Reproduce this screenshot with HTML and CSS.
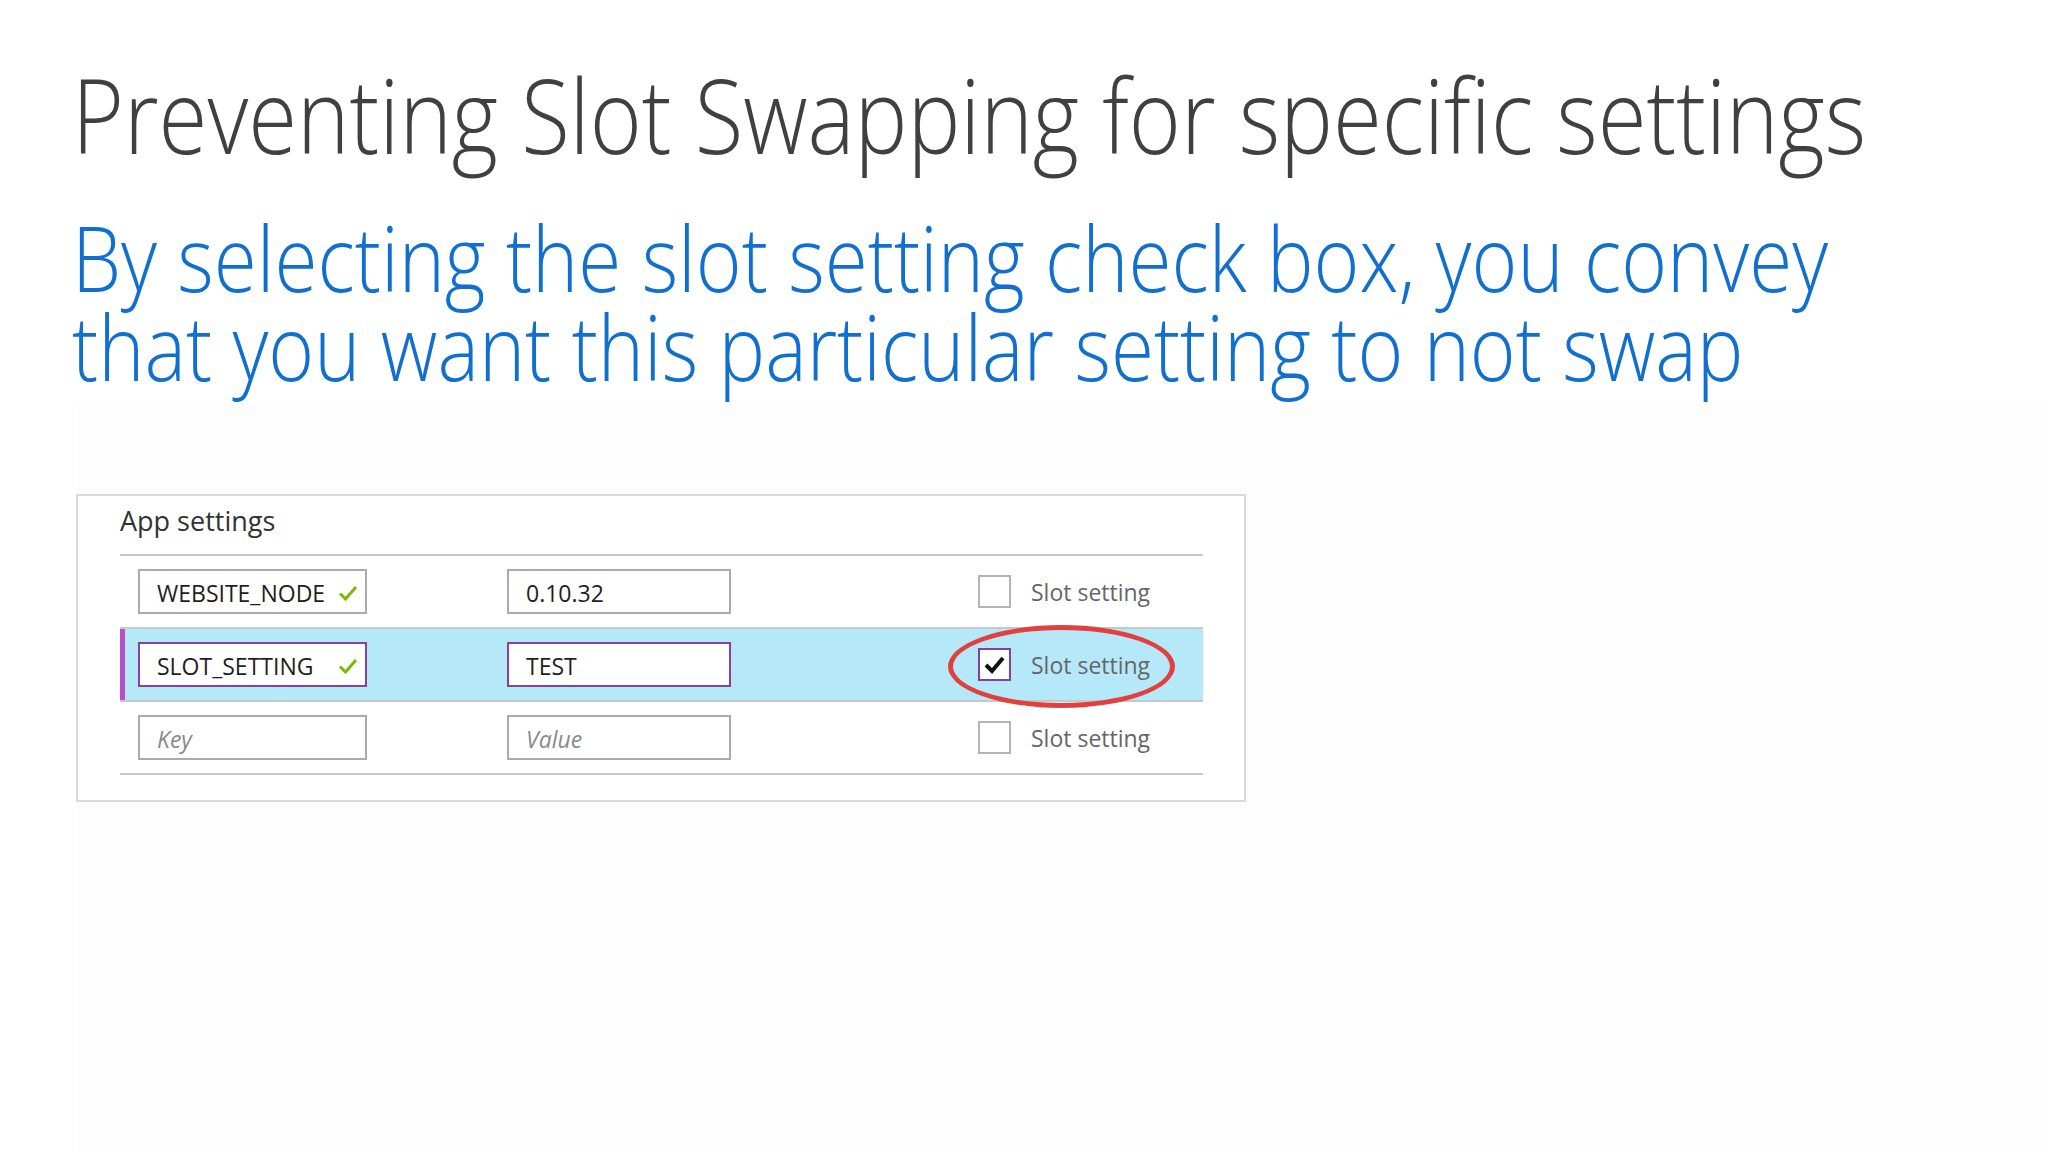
FILE: index.html
```html
<!DOCTYPE html>
<html lang="en">
<head>
<meta charset="utf-8">
<title>Preventing Slot Swapping for specific settings</title>
<link rel="stylesheet" href="styles.css">
</head>
<body>
<main class="slide">
  <h1 class="title"><span class="fit">Preventing Slot Swapping for specific settings</span></h1>
  <p class="lead"><span class="line">By selecting the slot setting check box, you convey</span><span class="line">that you want this particular setting to not swap</span></p>
  <section class="canvas">
    <div class="panel">
      <div class="panel-head">App settings</div>
      <div class="row">
        <div class="field key"><span class="txt">WEBSITE_NODE</span>
          <svg class="ok" viewBox="0 0 20 16" width="20" height="16"><path d="M2 8.5 L7.5 14 L18 2" fill="none" stroke="#7fba00" stroke-width="3"/></svg>
        </div>
        <div class="field val"><span class="txt">0.10.32</span></div>
        <div class="slot"><span class="box"></span><span class="slot-label">Slot setting</span></div>
      </div>
      <div class="row selected">
        <div class="field key"><span class="txt">SLOT_SETTING</span>
          <svg class="ok" viewBox="0 0 20 16" width="20" height="16"><path d="M2 8.5 L7.5 14 L18 2" fill="none" stroke="#7fba00" stroke-width="3"/></svg>
        </div>
        <div class="field val"><span class="txt">TEST</span></div>
        <div class="slot"><span class="box checked"><svg viewBox="0 0 29 29" width="29" height="29"><path d="M6 15 L12 21 L23 8" fill="none" stroke="#111" stroke-width="4" stroke-linejoin="miter"/></svg></span><span class="slot-label">Slot setting</span></div>
        <div class="highlight"></div>
      </div>
      <div class="row">
        <div class="field key"><span class="ph">Key</span></div>
        <div class="field val"><span class="ph">Value</span></div>
        <div class="slot"><span class="box"></span><span class="slot-label">Slot setting</span></div>
      </div>
    </div>
  </section>
</main>
</body>
</html>
```
FILE: styles.css
```css
html, body {
  margin: 0;
  padding: 0;
  background: #ffffff;
}

body {
  width: 2048px;
  height: 1152px;
  overflow: hidden;
  font-family: "Open Sans", "Noto Sans", "Liberation Sans", sans-serif;
}

.slide {
  display: flex;
  flex-direction: column;
  height: 100%;
  box-sizing: border-box;
  padding-left: 72px;
}

.title {
  margin: 62px 0 0;
  height: 106px;
  font-weight: 300;
  color: #404040;
  white-space: nowrap;
}

.title .fit {
  display: block;
  font-size: 88.9px;
  line-height: 90.6px;
  transform: scaleY(1.17);
  transform-origin: 0 0;
}

.lead {
  margin: 45px 0 0;
  font-weight: 300;
  color: #1170cf;
  white-space: nowrap;
}

.lead .line {
  display: block;
  height: 89px;
  font-size: 78.3px;
  line-height: 77.45px;
  transform: scaleY(1.1494);
  transform-origin: 0 0;
}

.canvas {
  flex: 1;
  margin-left: 6px;
  margin-top: 13px;
  padding-top: 90px;
  background: #fdfdfd;
}

.panel {
  margin-left: -2px;
  width: 1170px;
  height: 308px;
  box-sizing: border-box;
  border: 2px solid #dadada;
  background: #ffffff;
  padding: 0 41px 0 42px;
}

.panel-head {
  height: 60px;
  box-sizing: border-box;
  padding-top: 7px;
  font-size: 27px;
  line-height: 36px;
  color: #333333;
  border-bottom: 2px solid #c8c8c8;
}

.row {
  position: relative;
  display: flex;
  align-items: center;
  height: 73px;
  box-sizing: border-box;
  padding-left: 18px;
  border-bottom: 2px solid #c8c8c8;
}

.row.selected {
  background: #b5e9f9;
  box-shadow: inset 5px 0 0 #b54fce;
}

.field {
  display: flex;
  align-items: center;
  height: 45px;
  box-sizing: border-box;
  border: 2px solid #ababab;
  background: #ffffff;
  padding: 2px 7px 0 17px;
  font-size: 23px;
  color: #1e1e1e;
}

.row.selected .field {
  border-color: #8d3f9b;
}

.field.key {
  width: 229px;
  margin-right: 140px;
}

.field.val {
  width: 224px;
}

.ok {
  margin-left: auto;
}

.ph {
  font-style: italic;
  color: #8a8a8a;
}

.slot {
  display: flex;
  align-items: center;
  margin-left: 247px;
}

.box {
  display: flex;
  align-items: center;
  justify-content: center;
  width: 33px;
  height: 33px;
  box-sizing: border-box;
  border: 2px solid #b4b4b4;
  background: #ffffff;
}

.box.checked {
  border-color: #8c3e9c;
}

.slot-label {
  margin-left: 20px;
  font-size: 23px;
  color: #666666;
}

.highlight {
  position: absolute;
  left: 828px;
  top: -4px;
  width: 227px;
  height: 83px;
  box-sizing: border-box;
  border: 5px solid #e2403f;
  border-radius: 50%;
}
```
